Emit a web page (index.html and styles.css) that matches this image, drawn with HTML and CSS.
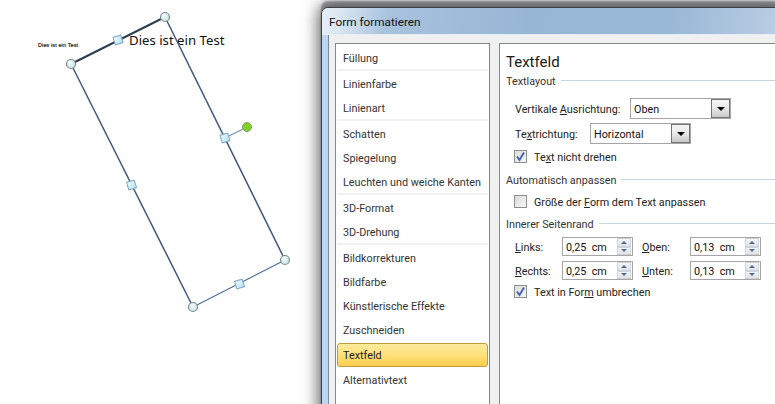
FILE: index.html
```html
<!DOCTYPE html>
<html lang="de">
<head>
<meta charset="utf-8">
<title>Form formatieren</title>
<link rel="stylesheet" href="styles.css">
</head>
<body>
<svg class="canvas" width="340" height="404" viewBox="0 0 340 404">
  <defs>
    <radialGradient id="corner" cx="0.4" cy="0.35" r="0.8">
      <stop offset="0" stop-color="#f2fbfc"/>
      <stop offset="1" stop-color="#bfe0e4"/>
    </radialGradient>
    <linearGradient id="side" x1="0" y1="0" x2="1" y2="1">
      <stop offset="0" stop-color="#eefbff"/>
      <stop offset="1" stop-color="#b4e2f4"/>
    </linearGradient>
  </defs>
  <text class="tiny" x="38" y="47">Dies ist ein Test</text>
  <text class="shape-text" x="129" y="45">Dies ist ein Test</text>
  <path class="edge" d="M165 17 285 260"/>
  <path class="edge" d="M71 64 193 307"/>
  <path class="edge edge-thin" d="M193 307 285 260"/>
  <path class="edge edge-top" d="M71 64 165 17"/>
  <path class="rotate-line" d="M225 138 247 127"/>
  <circle class="rotate" cx="247" cy="127" r="4.5"/>
  <g class="corners">
    <circle cx="165" cy="17" r="4.5"/>
    <circle cx="71" cy="64" r="4.5"/>
    <circle cx="285" cy="260" r="4.5"/>
    <circle cx="193" cy="307" r="4.5"/>
  </g>
  <g class="sides">
    <rect x="114" y="36" width="8" height="8" transform="rotate(-17 118 40)"/>
    <rect x="221" y="134" width="8" height="8" transform="rotate(-17 225 138)"/>
    <rect x="127.500" y="181" width="8" height="8" transform="rotate(-17 131.500 185)"/>
    <rect x="235.500" y="280" width="8" height="8" transform="rotate(-17 239.500 284)"/>
  </g>
</svg>

<section class="dialog">
  <header class="titlebar">Form formatieren</header>
  <div class="client">
    <nav class="nav">
      <div class="nav-item">Füllung</div>
      <div class="nav-sep"></div>
      <div class="nav-item">Linienfarbe</div>
      <div class="nav-item">Linienart</div>
      <div class="nav-sep"></div>
      <div class="nav-item">Schatten</div>
      <div class="nav-item">Spiegelung</div>
      <div class="nav-item">Leuchten und weiche Kanten</div>
      <div class="nav-sep"></div>
      <div class="nav-item">3D-Format</div>
      <div class="nav-item">3D-Drehung</div>
      <div class="nav-sep"></div>
      <div class="nav-item">Bildkorrekturen</div>
      <div class="nav-item">Bildfarbe</div>
      <div class="nav-item">Künstlerische Effekte</div>
      <div class="nav-item">Zuschneiden</div>
      <div class="nav-item nav-active">Textfeld</div>
      <div class="nav-item">Alternativtext</div>
    </nav>
    <main class="panel">
      <h1 class="panel-title">Textfeld</h1>

      <div class="group group-first"><span>Textlayout</span><i></i></div>
      <div class="row row-vert">
        <label class="row-label">Vertikale <u>A</u>usrichtung:</label>
        <div class="combo"><span>Oben</span><b class="combo-btn"><em></em></b></div>
      </div>
      <div class="row row-dir">
        <label class="row-label">Te<u>x</u>trichtung:</label>
        <div class="combo"><span>Horizontal</span><b class="combo-btn"><em></em></b></div>
      </div>
      <div class="check-row check-dir">
        <span class="check checked"><svg viewBox="0 0 11 11" width="11" height="11"><path d="M2 5.500 4.500 9 9 1.500" fill="none" stroke="#4a66a8" stroke-width="2"/></svg></span>
        <span class="check-text">Te<u>x</u>t nicht drehen</span>
      </div>

      <div class="group group-auto"><span>Automatisch anpassen</span><i></i></div>
      <div class="check-row check-auto">
        <span class="check"></span>
        <span class="check-text">Größe der <u>F</u>orm dem Text anpassen</span>
      </div>

      <div class="group group-margin"><span>Innerer Seitenrand</span><i></i></div>
      <div class="spin-grid">
        <label class="spin-label"><u>L</u>inks:</label>
        <div class="spin"><span>0,25&nbsp; cm</span><b class="spin-btns"><em class="up"></em><em class="down"></em></b></div>
        <label class="spin-label"><u>O</u>ben:</label>
        <div class="spin"><span>0,13&nbsp; cm</span><b class="spin-btns"><em class="up"></em><em class="down"></em></b></div>
        <label class="spin-label"><u>R</u>echts:</label>
        <div class="spin"><span>0,25&nbsp; cm</span><b class="spin-btns"><em class="up"></em><em class="down"></em></b></div>
        <label class="spin-label"><u>U</u>nten:</label>
        <div class="spin"><span>0,13&nbsp; cm</span><b class="spin-btns"><em class="up"></em><em class="down"></em></b></div>
      </div>
      <div class="check-row check-wrap">
        <span class="check checked"><svg viewBox="0 0 11 11" width="11" height="11"><path d="M2 5.500 4.500 9 9 1.500" fill="none" stroke="#4a66a8" stroke-width="2"/></svg></span>
        <span class="check-text">Text in For<u>m</u> umbrechen</span>
      </div>
    </main>
  </div>
</section>
</body>
</html>
```
FILE: styles.css
```css
html, body {
  margin: 0;
  height: 100%;
  background: #fff;
  overflow: hidden;
}
body {
  position: relative;
  font-family: Roboto, "Noto Sans", sans-serif;
  font-size: 10.8px;
  color: #1c1c1c;
}
.canvas { position: absolute; left: 0; top: 0; }
.tiny {
  font: 5.5px "Liberation Sans", sans-serif;
  fill: #111;
  stroke: #111;
  stroke-width: 0.15;
  letter-spacing: 0.1px;
}
.shape-text {
  font: 13.2px "Noto Sans", sans-serif;
  fill: #111;
}
.edge { stroke: #3f5a78; stroke-width: 1.5; fill: none; }
.edge-thin { stroke: #4a6f98; stroke-width: 1.2; }
.edge-top { stroke: #2c3e52; stroke-width: 2; }
.rotate-line { stroke: #6f93b5; stroke-width: 1.2; fill: none; }
.rotate { fill: #7fd321; stroke: #8a9a8a; stroke-width: 1; }
.corners circle { fill: url(#corner); stroke: #7f8a8c; stroke-width: 1.2; }
.sides rect { fill: url(#side); stroke: #7fa4c6; stroke-width: 1; }

.dialog {
  position: absolute;
  left: 321px;
  top: 7px;
  right: -10px;
  bottom: -10px;
  display: flex;
  flex-direction: column;
  background: #bcd6f2;
  border: 1px solid #3a3f45;
  border-radius: 7px 7px 0 0;
  box-shadow: 0 0 16px 3px rgba(0, 0, 0, .6), 0 -6px 2px rgba(90, 90, 90, .5);
}
.titlebar {
  height: 27px;
  flex: none;
  display: flex;
  align-items: center;
  padding: 1px 0 0 7px;
  font-size: 11.8px;
  color: #111;
  border-radius: 6px 6px 0 0;
  border-bottom: 1px solid #e6eef6;
  box-sizing: border-box;
  background: linear-gradient(100deg, #e6eff7 0, #dbe7f3 4%, #a9c3de 14%, #97b5d5 45%, #99b7d6 75%, #bccfe4 100%);
}
.client {
  flex: 1;
  min-height: 0;
  margin-left: 6px;
  border-left: 1px solid #7d8994;
  background: #f0f0f0;
  display: flex;
  gap: 9px;
  padding: 8px 0 0 6px;
}
.nav {
  width: 155px;
  box-sizing: border-box;
  flex: none;
  background: #fff;
  border: 1px solid #828790;
  padding: 1px 1px 0;
}
.nav-item {
  height: 24px;
  line-height: 28px;
  padding-left: 6px;
  color: #333;
  white-space: nowrap;
}
.nav-sep {
  height: 2px;
  background: #f0f0f5;
}
.nav-active {
  height: 24px;
  margin-top: 2px;
  box-sizing: border-box;
  line-height: 24px;
  padding-left: 5px;
  border: 1px solid #c29a42;
  border-radius: 3px;
  color: #222;
  background: linear-gradient(#fdeb9c 0, #fee17a 50%, #fecd4c 100%);
}
.panel {
  flex: 1;
  min-width: 0;
  background: #fff;
  border: 1px solid #828790;
  padding: 0 0 0 6px;
}
.panel-title {
  margin: 0;
  height: 27px;
  line-height: 36px;
  font-size: 15px;
  font-weight: 400;
  color: #1a1a1a;
}
.group {
  display: flex;
  align-items: center;
  gap: 5px;
  height: 18px;
  color: #333;
}
.group span { padding-top: 2px; }
.group i {
  flex: 1;
  height: 1px;
  background: #c9d6e3;
}
.group-auto { margin-top: 7px; }
.group-margin { margin-top: 6px; }
.row {
  display: flex;
  align-items: center;
  margin-left: 9px;
  height: 21px;
}
.row-vert { margin-top: 9px; }
.row-vert .row-label { width: 115px; }
.row-dir { margin-top: 4px; }
.row-dir .row-label { width: 75px; }
.row-label { color: #222; padding-top: 2px; }
.combo {
  width: 99px;
  height: 19px;
  border: 1px solid #a5a5a5;
  display: flex;
  justify-content: space-between;
  align-items: stretch;
  background: #fff;
}
.combo span { padding-left: 3px; line-height: 21px; color: #111; }
.combo-btn {
  width: 17px;
  border: 1px solid #747474;
  background: linear-gradient(#f6f6f6 0, #e8e8e8 50%, #c9c9c9 100%);
  display: flex;
  align-items: center;
  justify-content: center;
}
.combo-btn em {
  width: 0;
  height: 0;
  border: 4px solid transparent;
  border-top-color: #000;
  border-bottom-width: 0;
}
.check-row {
  display: flex;
  align-items: center;
  gap: 7px;
  margin-left: 8px;
  height: 14px;
  color: #222;
}
.check-text { padding-top: 2px; }
.check {
  width: 11px;
  height: 11px;
  flex: none;
  display: block;
  border: 1px solid #8e8f8f;
  background: linear-gradient(135deg, #dcdcdc, #f6f6f6);
}
.check svg { display: block; }
.check-dir { margin-top: 5px; }
.check-auto { margin-top: 6px; }
.check-wrap { margin-top: 3px; }
.spin-grid {
  display: grid;
  grid-template-columns: 47px 80px 48px 71px;
  grid-auto-rows: 20px;
  row-gap: 4px;
  margin: 5px 0 0 9px;
}
.spin-label { line-height: 22px; color: #222; }
.spin {
  box-sizing: border-box;
  width: 71px;
  height: 19px;
  border: 1px solid #a5a5a5;
  display: flex;
  justify-content: space-between;
  background: #fff;
}
.spin span { padding-left: 3px; line-height: 19px; color: #111; white-space: nowrap; }
.spin-btns {
  width: 14px;
  margin-right: 1px;
  display: flex;
  flex-direction: column;
}
.spin-btns em {
  flex: 1;
  border: 1px solid #cfd3d8;
  background: linear-gradient(#f4f5f7, #dfe2e7);
  display: flex;
  align-items: center;
  justify-content: center;
}
.spin-btns em::after {
  content: "";
  border: 3.5px solid transparent;
}
.spin-btns .up::after { border-bottom-color: #4e6d96; border-top-width: 0; }
.spin-btns .down::after { border-top-color: #4e6d96; border-bottom-width: 0; }
```
